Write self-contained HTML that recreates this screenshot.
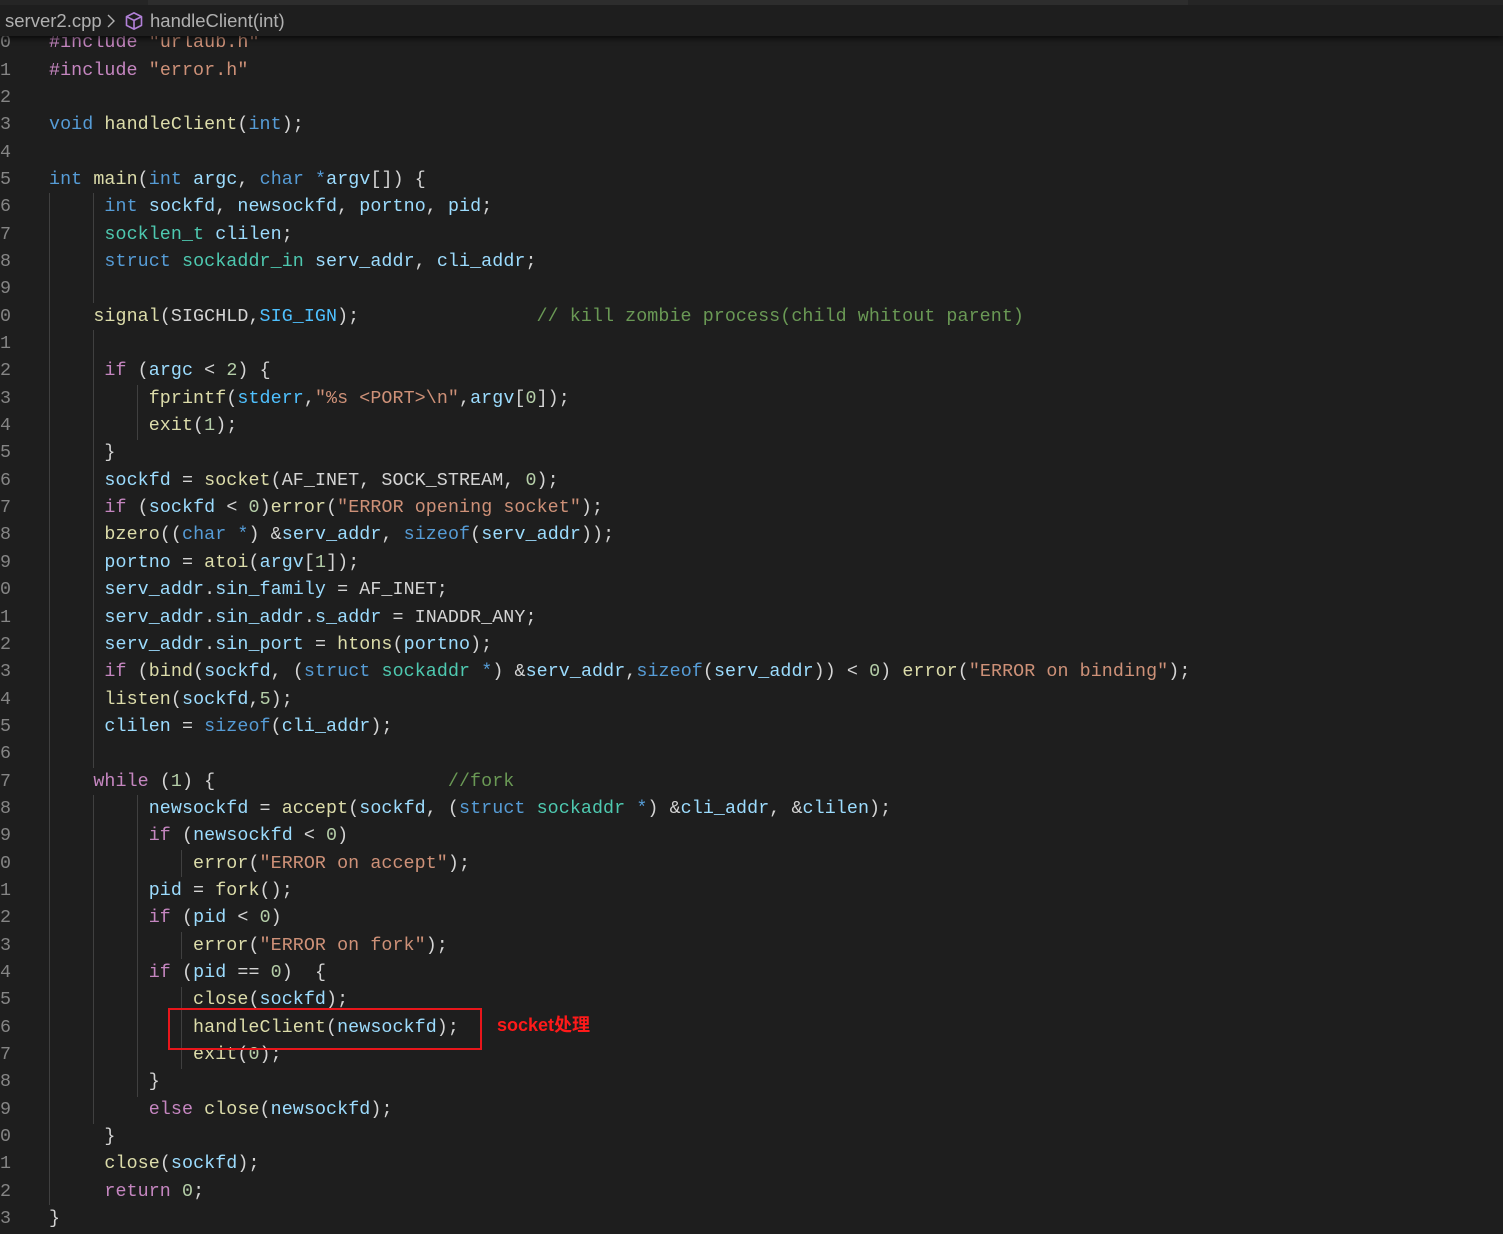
<!DOCTYPE html>
<html><head><meta charset="utf-8">
<style>
html,body{margin:0;padding:0;background:#1e1e1e;width:1503px;height:1234px;overflow:hidden;position:relative}
.code{position:absolute;left:49px;top:29.3px;margin:0;font-family:"Liberation Mono","DejaVu Sans Mono",monospace;font-size:18.33px;letter-spacing:0.08px;line-height:27.35px;color:#d4d4d4;white-space:pre}
.ln{position:absolute;left:0;top:29.3px;margin:0;font-family:"Liberation Mono","DejaVu Sans Mono",monospace;font-size:18.33px;line-height:27.35px;color:#858585;white-space:pre}
.k{color:#569cd6}.c{color:#c586c0}.f{color:#dcdcaa}.v{color:#9cdcfe}.s{color:#ce9178}.n{color:#b5cea8}.t{color:#4ec9b0}.m{color:#4fc1ff}.cm{color:#6a9955}
.g{position:absolute;width:1px;background:#404040}
.hdr{position:absolute;left:0;top:0;width:1503px;height:36px;background:#1e1e1e;box-shadow:0 3px 5px rgba(0,0,0,0.6);z-index:5}
.strip{position:absolute;top:0;height:5px}
.bt{position:absolute;top:10px;font-family:"Liberation Sans",sans-serif;font-size:18.5px;color:#b0b0b0;white-space:nowrap}
.box{position:absolute;left:168px;top:1008px;width:310px;height:38px;border:2px solid #e8161b}
.note{position:absolute;left:497px;top:1011px;font-family:"Liberation Sans","Noto Sans CJK SC",sans-serif;font-weight:bold;font-size:18px;color:#ff1a1a}
</style></head><body>
<div class="hdr">
<div class="strip" style="left:0;width:148px;background:#252525"></div>
<div class="strip" style="left:148px;width:1040px;background:#2d2d2d"></div>
<div class="strip" style="left:1188px;width:315px;background:#252525"></div>
<div class="bt" style="left:5px">server2.cpp</div>
<svg style="position:absolute;left:106px;top:13px" width="10" height="16" viewBox="0 0 10 16"><path d="M2 2 L8 8 L2 14" fill="none" stroke="#b0b0b0" stroke-width="1.4"/></svg>
<svg style="position:absolute;left:124px;top:11px" width="20" height="20" viewBox="0 0 16 16"><path d="M8 1.5 L14 4.5 L14 11.5 L8 14.5 L2 11.5 L2 4.5 Z M2 4.5 L8 7.5 L14 4.5 M8 7.5 L8 14.5" fill="none" stroke="#b180d7" stroke-width="1.3" stroke-linejoin="round"/></svg>
<div class="bt" style="left:150px">handleClient(int)</div>
</div>
<pre class="ln">0
1
2
3
4
5
6
7
8
9
0
1
2
3
4
5
6
7
8
9
0
1
2
3
4
5
6
7
8
9
0
1
2
3
4
5
6
7
8
9
0
1
2
3</pre>
<div class="g" style="left:49px;top:193px;height:1012px"></div>
<div class="g" style="left:93px;top:193px;height:110px"></div>
<div class="g" style="left:93px;top:330px;height:438px"></div>
<div class="g" style="left:93px;top:795px;height:329px"></div>
<div class="g" style="left:137px;top:385px;height:55px"></div>
<div class="g" style="left:137px;top:795px;height:302px"></div>
<div class="g" style="left:181px;top:850px;height:27px"></div>
<div class="g" style="left:181px;top:932px;height:27px"></div>
<div class="g" style="left:181px;top:987px;height:82px"></div>
<pre class="code"><span class="c">#include</span> <span class="s">"urlaub.h"</span>
<span class="c">#include</span> <span class="s">"error.h"</span>

<span class="k">void</span> <span class="f">handleClient</span>(<span class="k">int</span>);

<span class="k">int</span> <span class="f">main</span>(<span class="k">int</span> <span class="v">argc</span>, <span class="k">char</span> <span class="k">*</span><span class="v">argv</span>[]) {
     <span class="k">int</span> <span class="v">sockfd</span>, <span class="v">newsockfd</span>, <span class="v">portno</span>, <span class="v">pid</span>;
     <span class="t">socklen_t</span> <span class="v">clilen</span>;
     <span class="k">struct</span> <span class="t">sockaddr_in</span> <span class="v">serv_addr</span>, <span class="v">cli_addr</span>;

    <span class="f">signal</span>(SIGCHLD,<span class="m">SIG_IGN</span>);                <span class="cm">// kill zombie process(child whitout parent)</span>

     <span class="c">if</span> (<span class="v">argc</span> &lt; <span class="n">2</span>) {
         <span class="f">fprintf</span>(<span class="m">stderr</span>,<span class="s">"%s &lt;PORT&gt;\n"</span>,<span class="v">argv</span>[<span class="n">0</span>]);
         <span class="f">exit</span>(<span class="n">1</span>);
     }
     <span class="v">sockfd</span> = <span class="f">socket</span>(AF_INET, SOCK_STREAM, <span class="n">0</span>);
     <span class="c">if</span> (<span class="v">sockfd</span> &lt; <span class="n">0</span>)<span class="f">error</span>(<span class="s">"ERROR opening socket"</span>);
     <span class="f">bzero</span>((<span class="k">char</span> <span class="k">*</span>) &amp;<span class="v">serv_addr</span>, <span class="k">sizeof</span>(<span class="v">serv_addr</span>));
     <span class="v">portno</span> = <span class="f">atoi</span>(<span class="v">argv</span>[<span class="n">1</span>]);
     <span class="v">serv_addr</span>.<span class="v">sin_family</span> = AF_INET;
     <span class="v">serv_addr</span>.<span class="v">sin_addr</span>.<span class="v">s_addr</span> = INADDR_ANY;
     <span class="v">serv_addr</span>.<span class="v">sin_port</span> = <span class="f">htons</span>(<span class="v">portno</span>);
     <span class="c">if</span> (<span class="f">bind</span>(<span class="v">sockfd</span>, (<span class="k">struct</span> <span class="t">sockaddr</span> <span class="k">*</span>) &amp;<span class="v">serv_addr</span>,<span class="k">sizeof</span>(<span class="v">serv_addr</span>)) &lt; <span class="n">0</span>) <span class="f">error</span>(<span class="s">"ERROR on binding"</span>);
     <span class="f">listen</span>(<span class="v">sockfd</span>,<span class="n">5</span>);
     <span class="v">clilen</span> = <span class="k">sizeof</span>(<span class="v">cli_addr</span>);

    <span class="c">while</span> (<span class="n">1</span>) {                     <span class="cm">//fork</span>
         <span class="v">newsockfd</span> = <span class="f">accept</span>(<span class="v">sockfd</span>, (<span class="k">struct</span> <span class="t">sockaddr</span> <span class="k">*</span>) &amp;<span class="v">cli_addr</span>, &amp;<span class="v">clilen</span>);
         <span class="c">if</span> (<span class="v">newsockfd</span> &lt; <span class="n">0</span>)
             <span class="f">error</span>(<span class="s">"ERROR on accept"</span>);
         <span class="v">pid</span> = <span class="f">fork</span>();
         <span class="c">if</span> (<span class="v">pid</span> &lt; <span class="n">0</span>)
             <span class="f">error</span>(<span class="s">"ERROR on fork"</span>);
         <span class="c">if</span> (<span class="v">pid</span> == <span class="n">0</span>)  {
             <span class="f">close</span>(<span class="v">sockfd</span>);
             <span class="f">handleClient</span>(<span class="v">newsockfd</span>);
             <span class="f">exit</span>(<span class="n">0</span>);
         }
         <span class="c">else</span> <span class="f">close</span>(<span class="v">newsockfd</span>);
     }
     <span class="f">close</span>(<span class="v">sockfd</span>);
     <span class="c">return</span> <span class="n">0</span>;
}</pre>
<div class="box"></div>
<div class="note">socket处理</div>
</body></html>
